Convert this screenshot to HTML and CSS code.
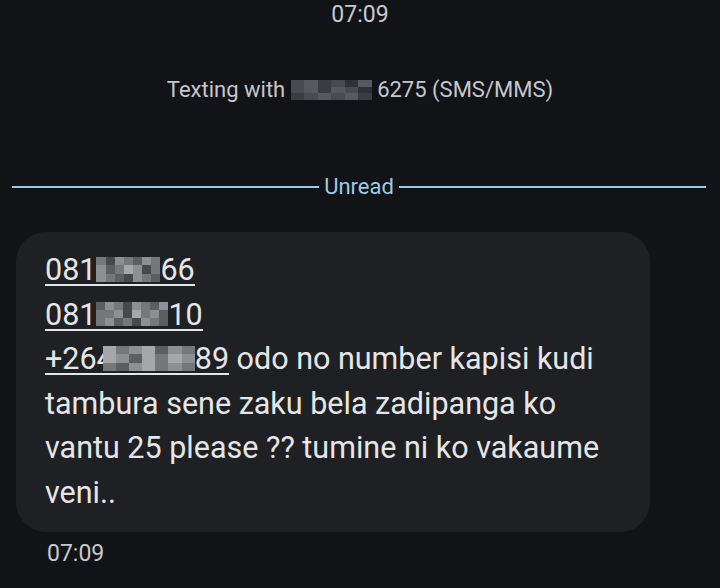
FILE: index.html
```html
<!DOCTYPE html>
<html>
<head>
<meta charset="utf-8">
<link rel="stylesheet" href="styles.css">
</head>
<body>
<div class="screen">
  <div class="time-top">07:09</div>
  <div class="info">Texting with <span class="blur hdr"><span class="grid"><i class="h2"></i><i class="h3"></i><i class="h1"></i><i class="h2"></i><i class="h4"></i><i class="h3"></i><i class="h2"></i><i class="h3"></i><i class="h1"></i><i class="h3"></i><i class="h2"></i><i class="h4"></i><i class="h1"></i><i class="h2"></i><i class="h3"></i><i class="h2"></i><i class="h3"></i><i class="h1"></i></span></span> 6275 (SMS/MMS)</div>
  <div class="divider"><span class="line"></span><span class="label">Unread</span><span class="line"></span></div>
  <div class="bubble">
    <span class="link">081<span class="blur b1"><span class="grid"><i class="p2"></i><i class="p4"></i><i class="p3"></i><i class="p2"></i><i class="p1"></i><i class="p3"></i><i class="p2"></i><i class="p3"></i><i class="p1"></i><i class="p2"></i><i class="p5"></i><i class="p3"></i><i class="p4"></i><i class="p2"></i><i class="p3"></i><i class="p2"></i><i class="p1"></i><i class="p4"></i><i class="p3"></i><i class="p2"></i><i class="p1"></i></span></span>66</span><br>
    <span class="link">081<span class="blur b2"><span class="grid"><i class="p1"></i><i class="p3"></i><i class="p2"></i><i class="p4"></i><i class="p3"></i><i class="p2"></i><i class="p1"></i><i class="p3"></i><i class="p2"></i><i class="p2"></i><i class="p3"></i><i class="p4"></i><i class="p5"></i><i class="p2"></i><i class="p3"></i><i class="p1"></i><i class="p2"></i><i class="p3"></i><i class="p1"></i><i class="p2"></i><i class="p4"></i><i class="p3"></i><i class="p2"></i><i class="p1"></i></span></span>10</span><br>
    <span class="link">+264<span class="blur b3"><span class="grid"><i class="p5"></i><i class="p2"></i><i class="p3"></i><i class="p5"></i><i class="p1"></i><i class="p3"></i><i class="p2"></i><i class="p5"></i><i class="p3"></i><i class="p1"></i><i class="p5"></i><i class="p2"></i><i class="p5"></i><i class="p3"></i><i class="p2"></i><i class="p1"></i><i class="p3"></i><i class="p5"></i><i class="p2"></i><i class="p3"></i><i class="p2"></i></span></span>89</span> odo no number kapisi kudi<br>
    tambura sene zaku bela zadipanga ko<br>
    vantu 25 please ?? tumine ni ko vakaume<br>
    veni..
  </div>
  <div class="stamp">07:09</div>
</div>
</body>
</html>
```
FILE: styles.css
```css
html, body {
  margin: 0;
  padding: 0;
  background: #111317;
}
.screen {
  width: 720px;
  height: 588px;
  overflow: hidden;
  display: flex;
  flex-direction: column;
  font-family: Roboto, "Noto Sans", sans-serif;
  color: #e3e3e6;
}
.time-top {
  height: 30px;
  line-height: 30px;
  font-size: 23px;
  text-align: center;
  color: #c8c9ce;
}
.info {
  margin-top: 45px;
  height: 30px;
  line-height: 30px;
  font-size: 22px;
  text-align: center;
  color: #c6c7cc;
}
.divider {
  margin-top: 70px;
  height: 24px;
  display: flex;
  align-items: center;
  padding: 0 14px 0 12px;
  gap: 5px;
}
.divider .line {
  flex: 1;
  height: 2px;
  background: #9bcbe5;
}
.divider .label {
  font-size: 22px;
  line-height: 24px;
  color: #9bcbe5;
}
.bubble {
  margin-top: 33px;
  margin-left: 16px;
  width: 634px;
  height: 300px;
  box-sizing: border-box;
  padding: 16px 20px 0 29px;
  background: #1f2024;
  border-radius: 30px;
  font-size: 30.5px;
  line-height: 44.5px;
  color: #e6e6e8;
  white-space: nowrap;
}
.link {
  background: linear-gradient(#e6e6e8, #e6e6e8) no-repeat 0 calc(100% - 1px) / 100% 2px;
}
.blur {
  display: inline-block;
  overflow: hidden;
  vertical-align: -2px;
  line-height: 0;
}
.blur .grid {
  display: grid;
  width: 100%;
  height: 100%;
}
.blur i {
  display: block;
}
.hdr {
  width: 81px;
  height: 20px;
  vertical-align: -3px;
}
.hdr .grid {
  grid-template-columns: repeat(6, 1fr);
  grid-template-rows: repeat(3, 1fr);
}
.b1 {
  width: 64px;
  height: 25px;
}
.b1 .grid {
  grid-template-columns: repeat(7, 1fr);
  grid-template-rows: repeat(3, 1fr);
}
.b2 {
  width: 72px;
  height: 25px;
}
.b2 .grid {
  grid-template-columns: repeat(8, 1fr);
  grid-template-rows: repeat(3, 1fr);
}
.b3 {
  width: 92px;
  height: 25px;
  margin-left: -11px;
}
.b3 .grid {
  grid-template-columns: repeat(7, 1fr);
  grid-template-rows: repeat(3, 1fr);
}
.p1 { background: #5d5e62; }
.p2 { background: #76777b; }
.p3 { background: #8e8f93; }
.p4 { background: #47484c; }
.p5 { background: #a6a7aa; }
.h1 { background: #3b3c41; }
.h2 { background: #4a4b50; }
.h3 { background: #575860; }
.h4 { background: #303136; }
.stamp {
  margin-top: 10px;
  margin-left: 47px;
  height: 24px;
  line-height: 24px;
  font-size: 23px;
  color: #c8c9ce;
}
```
